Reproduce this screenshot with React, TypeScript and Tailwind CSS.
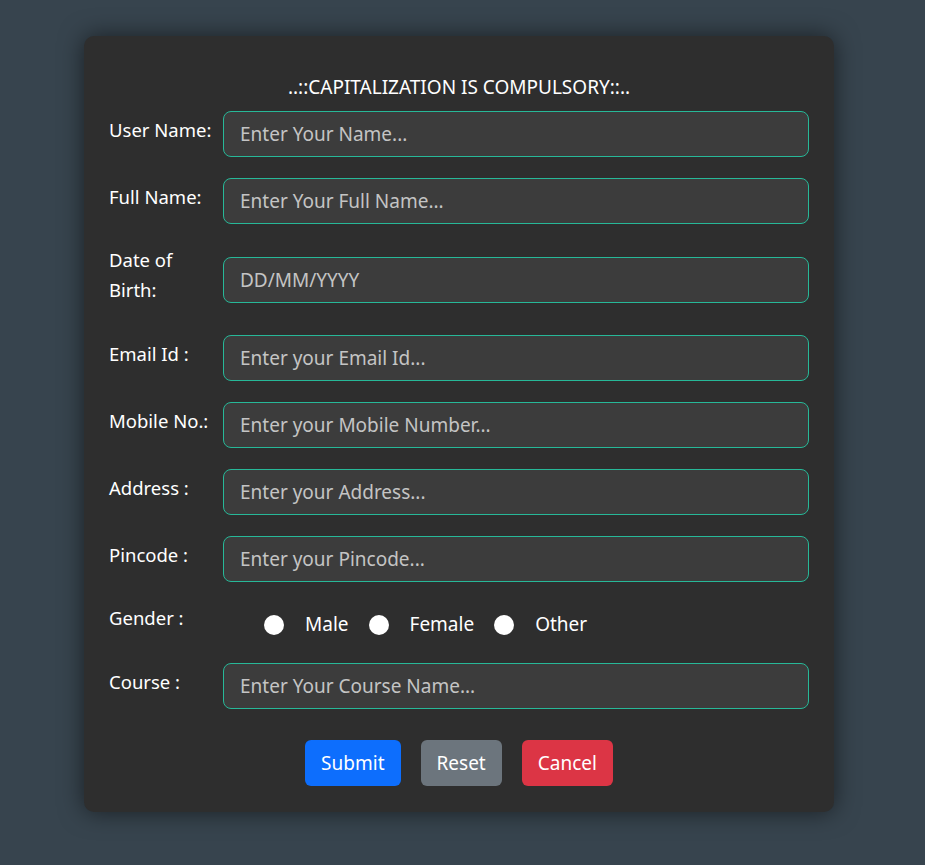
import React from 'react';

const fields = [
  { label: 'User Name:', placeholder: 'Enter Your Name...' },
  { label: 'Full Name:', placeholder: 'Enter Your Full Name...' },
  { label: 'Date of Birth:', placeholder: 'DD/MM/YYYY', tall: true },
  { label: 'Email Id :', placeholder: 'Enter your Email Id...' },
  { label: 'Mobile No.:', placeholder: 'Enter your Mobile Number...' },
  { label: 'Address :', placeholder: 'Enter your Address...' },
  { label: 'Pincode :', placeholder: 'Enter your Pincode...' },
];

function Row({ label, children, tall }: { label: string; children: React.ReactNode; tall?: boolean }) {
  return (
    <div className={tall ? 'flex min-h-[39px] items-center' : 'flex items-center'}>
      <label
        className={
          tall
            ? 'w-[114px] shrink-0 pb-[9px] pr-1 text-[18.5px] leading-[30px] text-white'
            : 'w-[114px] shrink-0 pb-2 pr-1 text-[18.5px] leading-[30px] text-white'
        }
      >
        {label}
      </label>
      <div className="flex-1">{children}</div>
    </div>
  );
}

function TextInput({ placeholder }: { placeholder: string }) {
  return (
    <input
      type="text"
      placeholder={placeholder}
      className="h-[46px] w-full rounded-lg border border-[#27b898] bg-[#3c3c3c] px-4 text-[19px] text-white placeholder:text-[#c4c4c4] focus:outline-none"
    />
  );
}

export default function App() {
  const [gender, setGender] = React.useState('');

  return (
    <div
      className="min-h-[865px] bg-[#37444e] pl-[84px] pt-9"
      style={{ fontFamily: '"Noto Sans", "Open Sans", sans-serif' }}
    >
      <form className="h-[776px] w-[750px] rounded-[10px] bg-[#2e2e2e] px-[25px] pt-[38px] shadow-[0_0_24px_rgba(0,0,0,0.55)]">
        <h2 className="mb-[10px] text-center text-[19px] leading-[27px] text-white">..::CAPITALIZATION IS COMPULSORY::..</h2>
        <div className="flex flex-col gap-[21px]">
          {fields.map((f) => (
            <Row key={f.label} label={f.label} tall={f.tall}>
              <TextInput placeholder={f.placeholder} />
            </Row>
          ))}
          <Row label="Gender :" tall>
            <div className="flex items-center pl-[41px] pt-1 text-[19px] text-white">
              {['Male', 'Female', 'Other'].map((g) => (
                <label key={g} className="mr-5 flex cursor-pointer items-center">
                  <span
                    onClick={() => setGender(g)}
                    className="mr-[21px] flex h-5 w-5 items-center justify-center rounded-full bg-white"
                  >
                    {gender === g && <span className="h-2 w-2 rounded-full bg-[#0d6efd]" />}
                  </span>
                  {g}
                </label>
              ))}
            </div>
          </Row>
          <Row label="Course :">
            <TextInput placeholder="Enter Your Course Name..." />
          </Row>
        </div>
        <div className="mt-[31px] flex justify-center gap-5">
          <button type="button" className="h-[46px] rounded-md bg-[#0d6efd] px-4 text-[19px] text-white">Submit</button>
          <button type="reset" className="h-[46px] rounded-md bg-[#6c757d] px-4 text-[19px] text-white">Reset</button>
          <button type="button" className="h-[46px] rounded-md bg-[#dc3545] px-4 text-[19px] text-white">Cancel</button>
        </div>
      </form>
    </div>
  );
}
